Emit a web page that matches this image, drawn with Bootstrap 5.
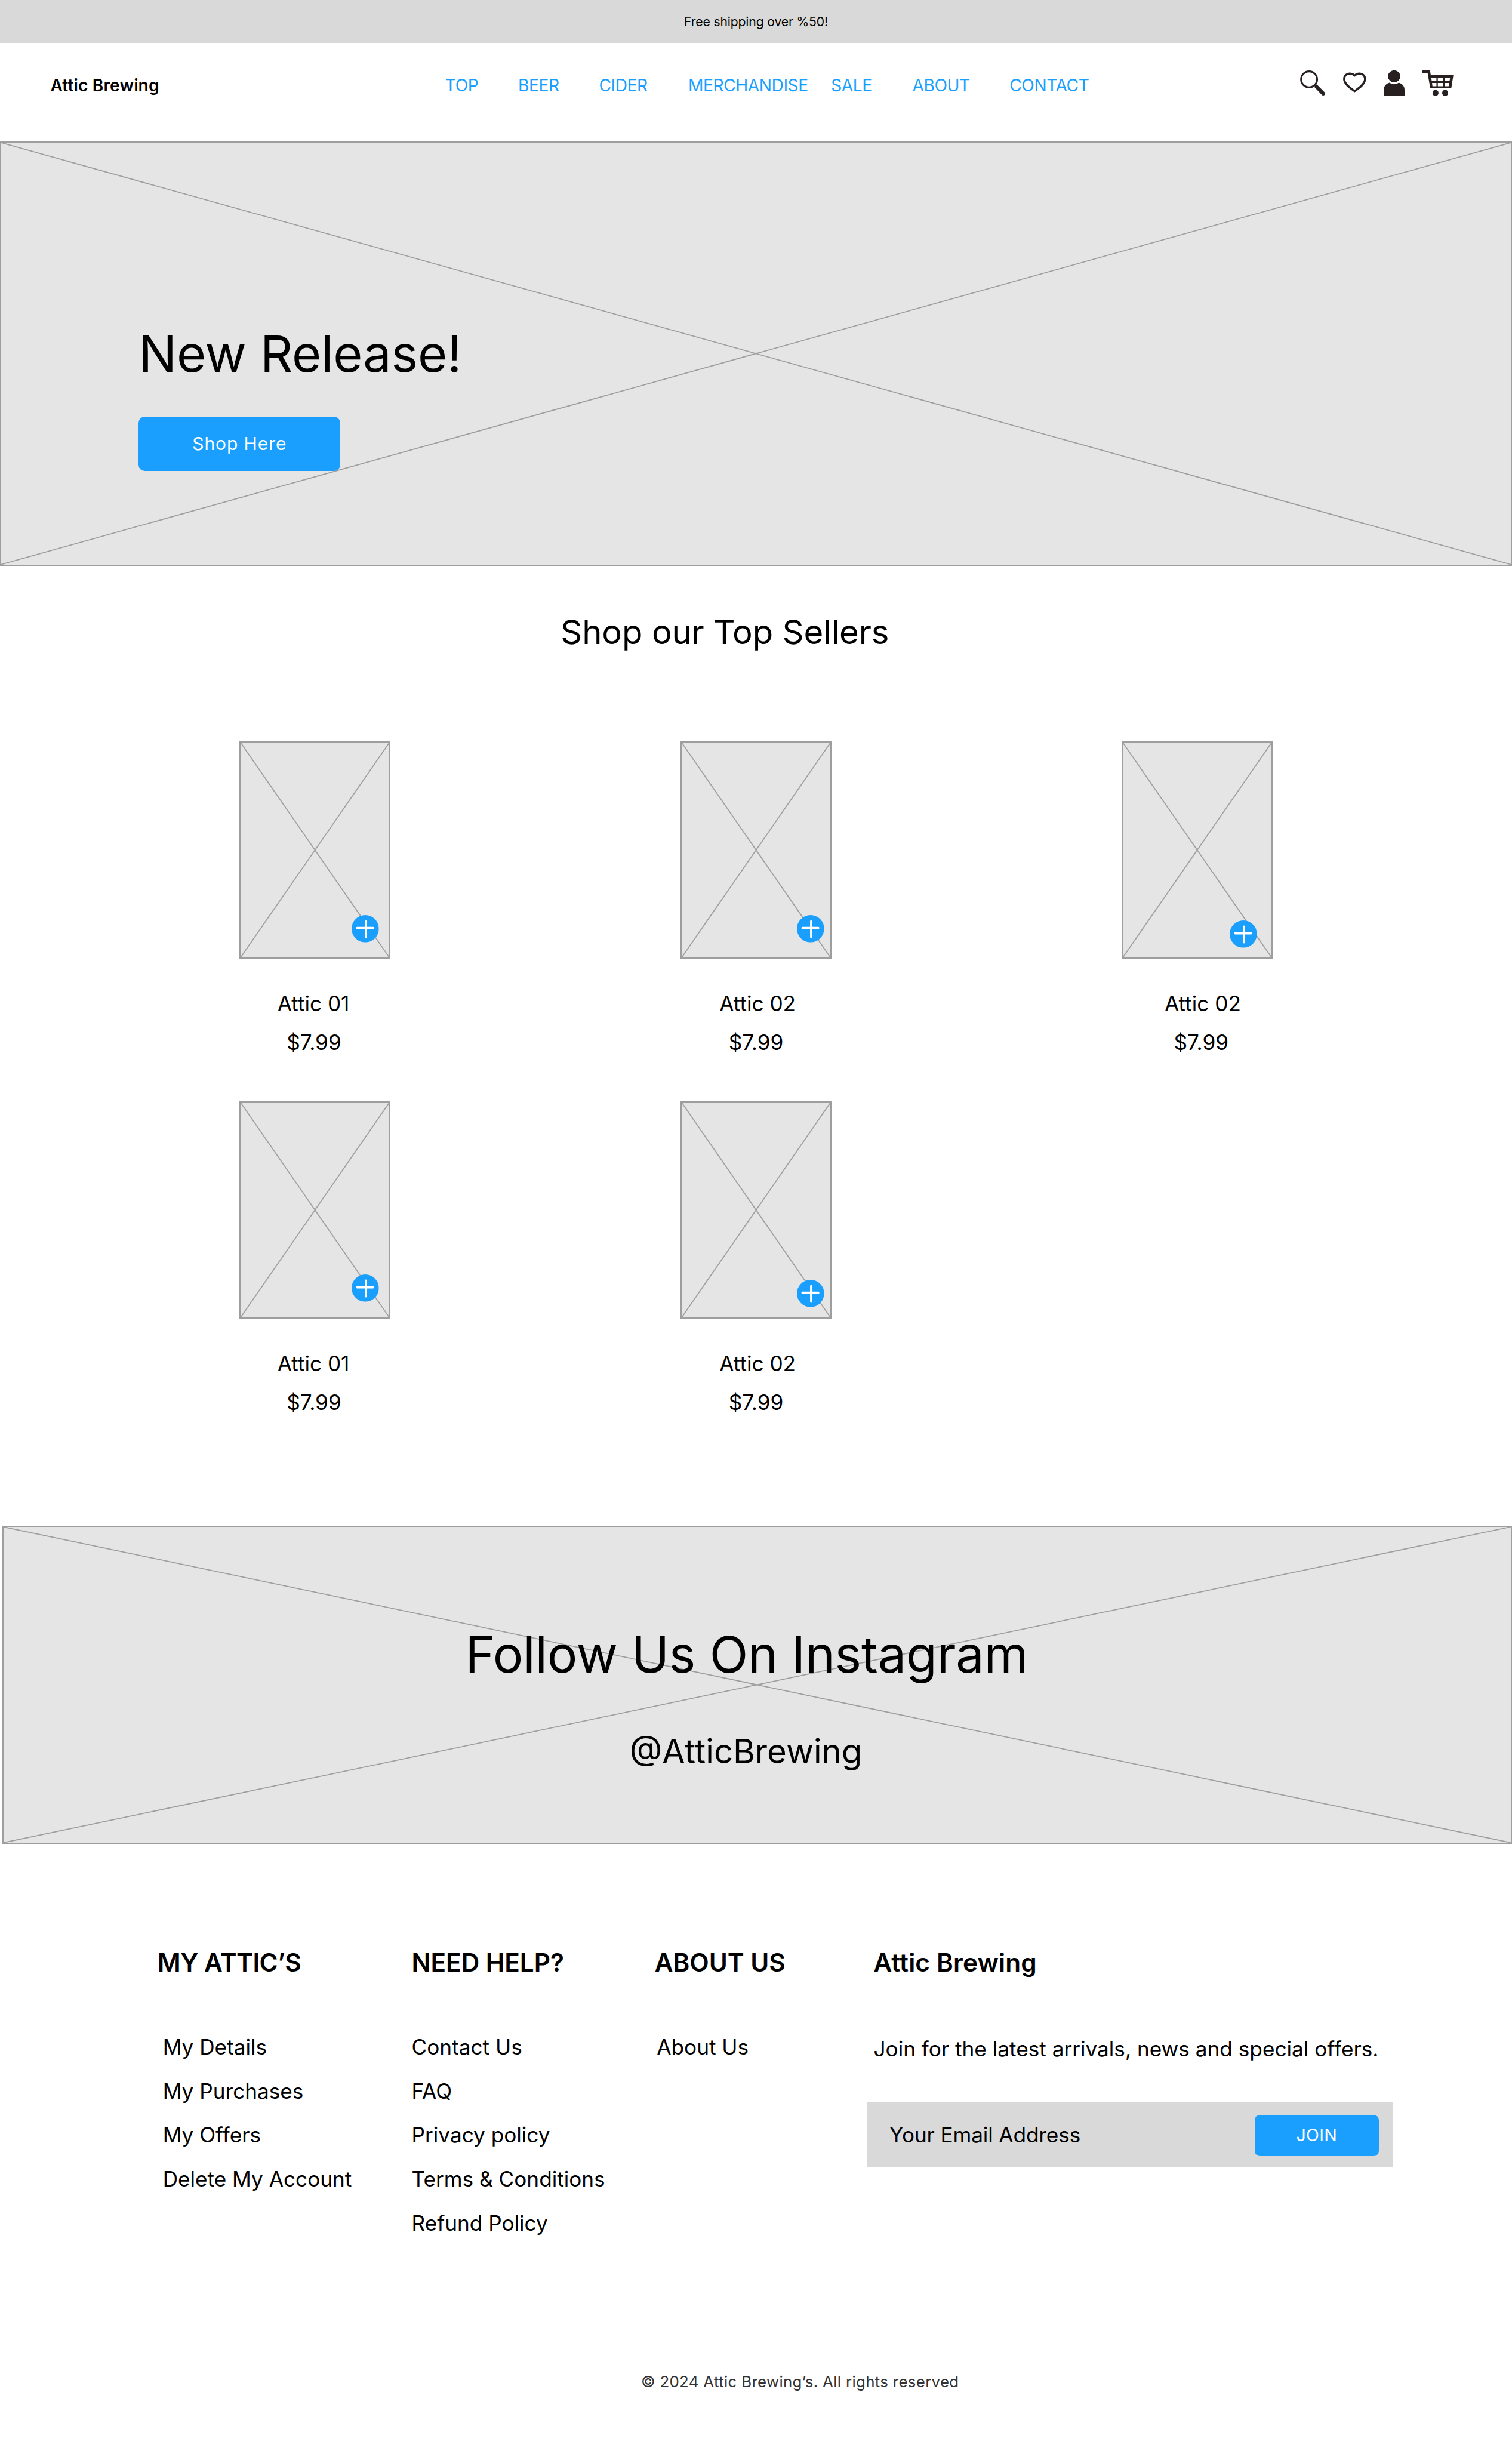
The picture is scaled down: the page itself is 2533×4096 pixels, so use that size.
<!DOCTYPE html>
<html lang="en">
<head>
<meta charset="utf-8">
<title>Attic Brewing</title>
<link href="https://cdn.jsdelivr.net/npm/bootstrap@5.3.0/dist/css/bootstrap.min.css" rel="stylesheet">
<style>
/* 1rem is ten design pixels of a 1440px wide layout */
html{font-size:17.5903px}
body{font-family:Inter,"Liberation Sans",sans-serif;font-size:2rem;line-height:2.4rem;color:#000;background:#fff;overflow:hidden;height:232.9rem}
a{color:inherit;text-decoration:none}
h1,h2,h3,p,ul{margin:0;font-weight:400}
.promo{height:4.1rem;background:#d9d9d9;font-size:1.2rem;line-height:1.5rem;padding-top:1.36rem;letter-spacing:-.007rem}
.site-nav{height:9.4rem;padding:0;font-size:1.6rem;line-height:1.9rem;align-items:flex-start!important}
.brand-name{font-weight:600;margin:3.11rem 0 0 4.8rem;width:37.6rem;letter-spacing:.007rem}
.menu{margin-top:3.11rem;color:#1a9fff;font-weight:400;letter-spacing:-.024rem}
.menu a{display:block;white-space:nowrap}
.tools{margin:2.6rem 5.6rem 0 auto;height:2.4rem}
.tools svg{display:block;height:2.4rem}
.ph{position:relative;background:#e5e5e5;border:2px solid #9e9e9e}
.ph>svg{position:absolute;inset:0;width:100%;height:100%;stroke:#9e9e9e}
.ph>svg line{vector-effect:non-scaling-stroke;stroke-width:1.76px}
.hero{height:40.4rem;padding:17.12rem 0 0 13.1rem}
.hero h1,.insta h2{font-size:4.8rem;line-height:5.8rem;position:relative}
.hero h1{letter-spacing:-.008rem}
.cta{position:relative;background:#1a9fff;color:#fff;border:0;border-radius:.6rem;font-weight:500;display:flex;align-items:center;justify-content:center;padding:0}
.cta:hover{background:#1a9fff;color:#fff}
.cta-shop{width:19.2rem;height:5.2rem;margin-top:3.13rem;font-size:1.7rem;letter-spacing:.055rem;font-weight:400}
.sellers-title{font-size:3.2rem;line-height:3.9rem;margin:4.4rem 0 9.6rem;padding-left:53.4rem;height:2.7rem;letter-spacing:-.009rem}
.shelf{padding-left:22.8rem;display:grid;grid-template-columns:repeat(3,14.4rem);column-gap:27.6rem;row-gap:0}
.item{height:34.3rem}
.item .ph{height:20.7rem;margin-bottom:3.05rem}
.item p{text-align:center;white-space:nowrap;line-height:2.4rem}
.item p+p{margin-top:1.3rem}
.add{position:absolute;width:2.6rem;height:2.6rem;padding:0;border:0;background:none;display:block;line-height:0}
.add svg{width:100%;height:100%;display:block}
.insta{height:30.3rem;margin:6.1rem 0 0 .25rem;padding-top:9.21rem}
.insta h2{padding-left:43.95rem;letter-spacing:-.01rem}
.insta p{font-size:3.2rem;line-height:3.9rem;margin-top:4.44rem;padding-left:59.6rem;position:relative}
.foot{padding:9.85rem 0 0 15rem}
.foot h3{font-size:2.4rem;line-height:2.9rem;font-weight:600;white-space:nowrap}
.foot ul{margin-top:5.38rem;list-style:none;padding:0}
.foot li{height:4.2rem;white-space:nowrap}
.c1{width:24.2rem}.c2{width:23.15rem}.c3{width:20.85rem}
.c1 h3{letter-spacing:-.027rem}
.c1 ul{padding-left:.5rem}.c3 ul{padding-left:.2rem}
.c4 h3{letter-spacing:.01rem}
.c4 p{margin-top:5.58rem}
.signup{width:50.1rem;height:6.1rem;background:#d9d9d9;margin:3.92rem 0 0 -.6rem;padding:0 1.4rem 0 2.1rem}
.signup input{border:0;background:none;padding:0;color:#000;font-size:2rem;line-height:2.4rem;width:30rem;letter-spacing:-.007rem}
.signup input::placeholder{color:#000;opacity:1}
.cta-join{width:11.8rem;height:3.9rem;font-size:1.62rem;font-weight:400;border-radius:.5rem;margin-top:.2rem;letter-spacing:.02rem}
.legal{font-size:1.47rem;line-height:2rem;letter-spacing:.018rem;color:#333;white-space:nowrap;padding-left:61.05rem;margin-top:11.08rem}
</style>
</head>
<body>
<svg width="0" height="0" class="position-absolute">
  <symbol id="plus" viewBox="0 0 26 26"><circle cx="13" cy="13" r="13" fill="#1a9fff" stroke="none"/><path d="M5.3 12.3H20.4M13.6 5.9V20.9" stroke="#fff" stroke-width="2.05" stroke-linecap="round"/></symbol>
</svg>

<div class="promo text-center">Free shipping over %50!</div>

<nav class="site-nav navbar navbar-expand flex-nowrap">
  <a class="brand-name" href="#">Attic Brewing</a>
  <div class="menu d-flex">
    <a href="#" style="width:6.95rem">TOP</a>
    <a href="#" style="width:7.7rem">BEER</a>
    <a href="#" style="width:8.5rem">CIDER</a>
    <a href="#" style="width:13.6rem">MERCHANDISE</a>
    <a href="#" style="width:7.75rem">SALE</a>
    <a href="#" style="width:9.25rem">ABOUT</a>
    <a href="#">CONTACT</a>
  </div>
  <div class="tools d-flex">
    <svg viewBox="0 0 24 24" style="margin-right:1.7rem"><circle cx="8.6" cy="8.5" r="7.6" fill="none" stroke="#271f20" stroke-width="1.8"/><path d="M14 14 L16 13.3 L23.6 21 Q24.3 22.3 23.4 23.3 Q22.3 24.2 21 23.6 L14 16.2Z" fill="#271f20"/></svg>
    <svg viewBox="0 0 22 24" style="margin-right:1.7rem"><path d="M11 19.8C8.5 17.8 1 13.5 1 8.3C1 5 3.4 3 6.1 3C8.5 3 10.1 4 11 5C11.9 4 13.5 3 15.9 3C18.6 3 21 5 21 8.3C21 13.5 13.5 17.8 11 19.8Z" fill="none" stroke="#271f20" stroke-width="1.9" stroke-linejoin="round"/></svg>
    <svg viewBox="0 0 20 24" style="margin-right:1.6rem"><ellipse cx="10" cy="5.6" rx="5.9" ry="5.7" fill="#271f20"/><path d="M0 24V19Q.2 13 5.5 11.7Q7.5 13.2 10 13.2T14.5 11.7Q19.8 13 20 19V24Z" fill="#271f20"/></svg>
    <svg viewBox="0 0 30 24"><path d="M0 0H7.8L8.5 4.6H30L28 17H8L5.5 2.4H0Z" fill="#271f20"/><path d="M9 7h4.9v3.2H9.4ZM15.2 7h5.2v3.2h-5.2ZM21.8 7h5.1l-.5 3.2h-4.6ZM9.7 11.9h4.2v3.1h-3.8ZM15.2 11.9h5.2v3.1h-5.2ZM21.8 11.9h4.3l-.6 3.1h-3.7Z" fill="#fff"/><circle cx="13" cy="21.4" r="2.9" fill="#271f20"/><circle cx="22.2" cy="21.4" r="2.9" fill="#271f20"/></svg>
  </div>
</nav>

<header class="hero ph">
  <svg preserveAspectRatio="none" viewBox="0 0 100 100"><line x1="0" y1="0" x2="100" y2="100"/><line x1="0" y1="100" x2="100" y2="0"/></svg>
  <h1>New Release!</h1>
  <a class="btn cta cta-shop" href="#">Shop Here</a>
</header>

<main>
  <h2 class="sellers-title">Shop our Top Sellers</h2>
  <section class="shelf">
    <article class="item">
      <div class="ph"><svg preserveAspectRatio="none" viewBox="0 0 100 100"><line x1="0" y1="0" x2="100" y2="100"/><line x1="0" y1="100" x2="100" y2="0"/></svg><button class="add" style="left:10.59rem;top:16.45rem"><svg><use href="#plus"/></svg></button></div>
      <p style="margin-left:-.3rem">Attic 01</p><p style="margin-left:-.2rem">$7.99</p>
    </article>
    <article class="item">
      <div class="ph"><svg preserveAspectRatio="none" viewBox="0 0 100 100"><line x1="0" y1="0" x2="100" y2="100"/><line x1="0" y1="100" x2="100" y2="0"/></svg><button class="add" style="left:10.99rem;top:16.45rem"><svg><use href="#plus"/></svg></button></div>
      <p style="margin-left:.3rem">Attic 02</p><p>$7.99</p>
    </article>
    <article class="item">
      <div class="ph"><svg preserveAspectRatio="none" viewBox="0 0 100 100"><line x1="0" y1="0" x2="100" y2="100"/><line x1="0" y1="100" x2="100" y2="0"/></svg><button class="add" style="left:10.19rem;top:16.95rem"><svg><use href="#plus"/></svg></button></div>
      <p style="margin-left:1.1rem">Attic 02</p><p style="margin-left:.8rem">$7.99</p>
    </article>
    <article class="item">
      <div class="ph"><svg preserveAspectRatio="none" viewBox="0 0 100 100"><line x1="0" y1="0" x2="100" y2="100"/><line x1="0" y1="100" x2="100" y2="0"/></svg><button class="add" style="left:10.59rem;top:16.37rem"><svg><use href="#plus"/></svg></button></div>
      <p style="margin-left:-.3rem">Attic 01</p><p style="margin-left:-.2rem">$7.99</p>
    </article>
    <article class="item">
      <div class="ph"><svg preserveAspectRatio="none" viewBox="0 0 100 100"><line x1="0" y1="0" x2="100" y2="100"/><line x1="0" y1="100" x2="100" y2="0"/></svg><button class="add" style="left:10.99rem;top:16.89rem"><svg><use href="#plus"/></svg></button></div>
      <p style="margin-left:.3rem">Attic 02</p><p>$7.99</p>
    </article>
  </section>
</main>

<section class="insta ph">
  <svg preserveAspectRatio="none" viewBox="0 0 100 100"><line x1="0" y1="0" x2="100" y2="100"/><line x1="0" y1="100" x2="100" y2="0"/></svg>
  <h2>Follow Us On Instagram</h2>
  <p>@AtticBrewing</p>
</section>

<footer>
  <div class="foot d-flex">
    <div class="c1"><h3>MY ATTIC’S</h3>
      <ul><li><a href="#">My Details</a></li><li><a href="#">My Purchases</a></li><li><a href="#">My Offers</a></li><li><a href="#">Delete My Account</a></li></ul></div>
    <div class="c2"><h3>NEED HELP?</h3>
      <ul><li><a href="#">Contact Us</a></li><li><a href="#">FAQ</a></li><li><a href="#">Privacy policy</a></li><li><a href="#">Terms &amp; Conditions</a></li><li><a href="#">Refund Policy</a></li></ul></div>
    <div class="c3"><h3>ABOUT US</h3>
      <ul><li><a href="#">About Us</a></li></ul></div>
    <div class="c4"><h3>Attic Brewing</h3>
      <p class="text-nowrap">Join for the latest arrivals, news and special offers.</p>
      <form class="signup d-flex align-items-center justify-content-between"><input type="email" placeholder="Your Email Address"><button type="button" class="btn cta cta-join">JOIN</button></form></div>
  </div>
  <p class="legal">© 2024 Attic Brewing’s. All rights reserved</p>
</footer>
<script src="https://cdn.jsdelivr.net/npm/bootstrap@5.3.0/dist/js/bootstrap.bundle.min.js"></script>
</body>
</html>
